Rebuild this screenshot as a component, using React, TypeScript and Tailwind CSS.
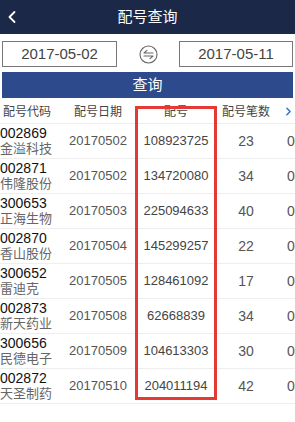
import { ChevronLeft, ChevronRight } from "lucide-react";

type Row = {
  code: string;
  name: string;
  date: string;
  num: string;
  count: string;
};

const rows: Row[] = [
  { code: "002869", name: "金溢科技", date: "20170502", num: "108923725", count: "23" },
  { code: "002871", name: "伟隆股份", date: "20170502", num: "134720080", count: "34" },
  { code: "300653", name: "正海生物", date: "20170503", num: "225094633", count: "40" },
  { code: "002870", name: "香山股份", date: "20170504", num: "145299257", count: "22" },
  { code: "300652", name: "雷迪克", date: "20170505", num: "128461092", count: "17" },
  { code: "002873", name: "新天药业", date: "20170508", num: "62668839", count: "34" },
  { code: "300656", name: "民德电子", date: "20170509", num: "104613303", count: "30" },
  { code: "002872", name: "天圣制药", date: "20170510", num: "204011194", count: "42" },
];

// 좌우 화살표 아이콘 (날짜 구간)
function SwapIcon() {
  return (
    <svg width="19" height="19" viewBox="0 0 19 19" fill="none" stroke="#666" strokeWidth="1.1">
      <circle cx="9.5" cy="9.5" r="8.5" />
      <path d="M5 8h9M5 8l3-2.6" strokeLinecap="round" />
      <path d="M5 11h9M14 11l-3 2.6" strokeLinecap="round" />
    </svg>
  );
}

export default function App() {
  return (
    <div
      className="relative w-[295px] h-[422px] overflow-hidden bg-white"
      style={{ fontFamily: '"Liberation Sans", "Noto Sans CJK SC", sans-serif' }}
    >
      <div className="relative h-[34px] bg-[#1b2848] flex items-center justify-center">
        <ChevronLeft className="absolute left-[2px] top-[7px] text-white" size={20} strokeWidth={2.2} />
        <span className="text-white text-[15px]">配号查询</span>
      </div>

      <div className="flex items-center justify-between px-[2px] pt-[7px] pb-[5px]">
        <div className="w-[115px] h-[26px] border border-[#777] flex items-center justify-center text-[15px] text-[#444]">
          2017-05-02
        </div>
        <SwapIcon />
        <div className="w-[114px] h-[26px] border border-[#777] flex items-center justify-center text-[15px] text-[#444]">
          2017-05-11
        </div>
      </div>

      <div className="mx-[2px] h-[26px] bg-[#2d4a8c] flex items-center justify-center text-white text-[15px]">
        查询
      </div>

      <div className="grid grid-cols-[60px_76px_80px_60px_19px] h-[25px] pt-[2px] items-center text-[12px] text-[#444]">
        <div className="pl-[3px]">配号代码</div>
        <div className="text-center">配号日期</div>
        <div className="text-center">配号</div>
        <div className="text-center">配号笔数</div>
        <div className="flex justify-end">
          <ChevronRight size={13} strokeWidth={2.6} className="text-[#2d6fc4]" />
        </div>
      </div>

      {rows.map((r) => (
        <div
          key={r.code}
          className="grid grid-cols-[60px_76px_80px_60px_19px] h-[35px] items-center border-t border-[#eee]"
        >
          <div className="flex flex-col leading-[16px] whitespace-nowrap">
            <span className="text-[14px] text-[#111]">{r.code}</span>
            <span className="text-[13px] text-[#666]">{r.name}</span>
          </div>
          <div className="text-center text-[13px] text-[#555]">{r.date}</div>
          <div className="text-center text-[13px] text-[#444]">{r.num}</div>
          <div className="text-center text-[14px] text-[#555]">{r.count}</div>
          <div className="overflow-hidden whitespace-nowrap pl-[11px] text-[14px] text-[#555]">00</div>
        </div>
      ))}
      <div className="border-t border-[#eee]" />

      {/* 빨간 강조 박스 */}
      <div className="absolute left-[135px] top-[106px] w-[82px] h-[294px] border-[3px] border-[#e53935]" />
    </div>
  );
}
